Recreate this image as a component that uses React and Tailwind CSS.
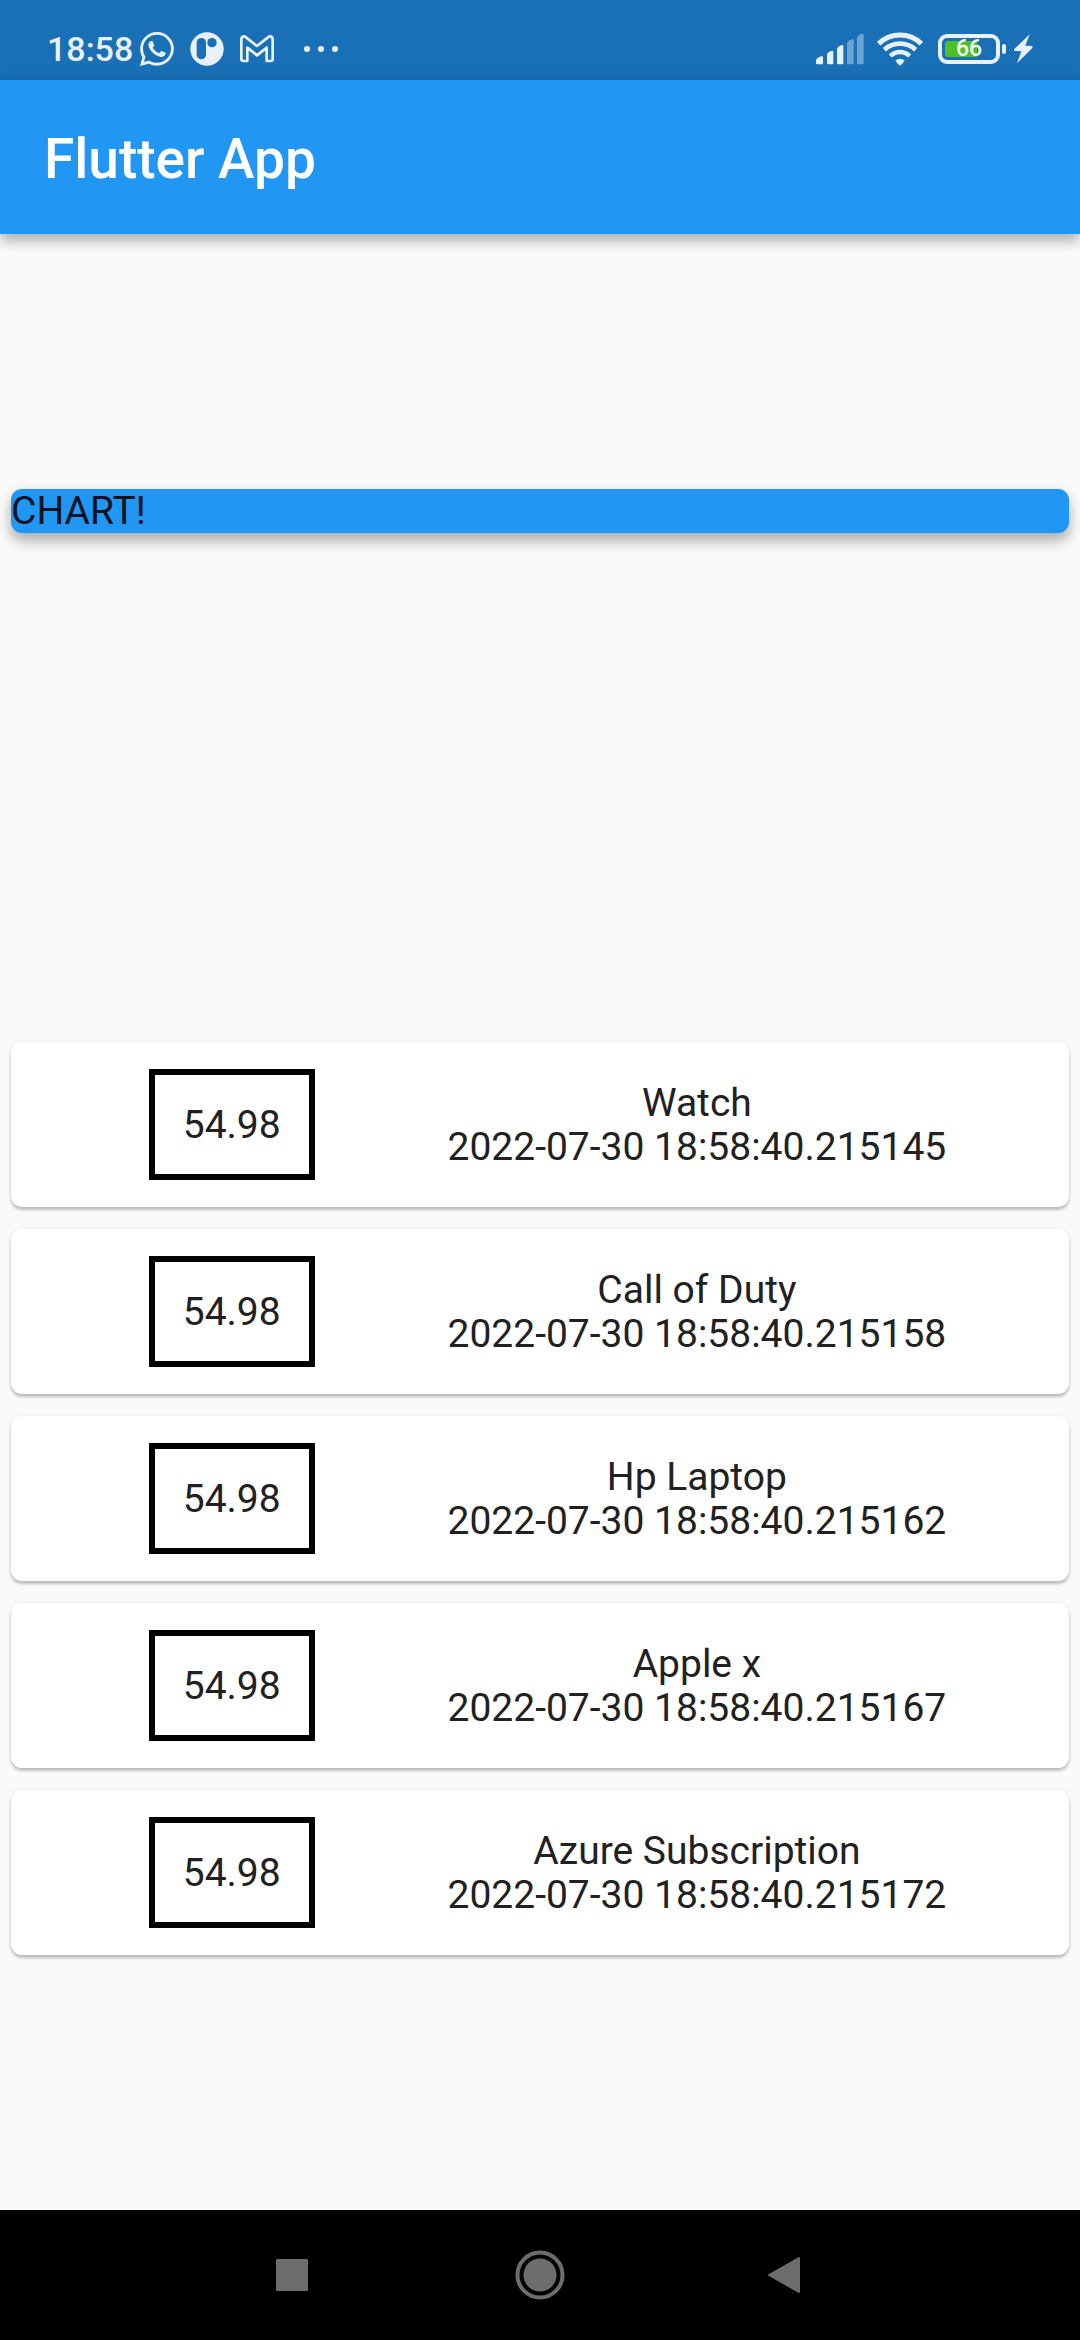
import React from "react";
import { BsWhatsapp } from "react-icons/bs";

const transactions = [
  { title: "Watch", amount: "54.98", date: "2022-07-30 18:58:40.215145" },
  { title: "Call of Duty", amount: "54.98", date: "2022-07-30 18:58:40.215158" },
  { title: "Hp Laptop", amount: "54.98", date: "2022-07-30 18:58:40.215162" },
  { title: "Apple x", amount: "54.98", date: "2022-07-30 18:58:40.215167" },
  { title: "Azure Subscription", amount: "54.98", date: "2022-07-30 18:58:40.215172" },
];

function PinIcon() {
  return (
    <svg className="h-[34px] w-[34px]" viewBox="0 0 102 102" aria-hidden="true">
      <circle cx="51" cy="51" r="50" fill="#e8f1f8" />
      <rect x="20" y="18" width="28" height="64" rx="14" fill="#1a70b7" />
      <circle cx="66" cy="32" r="14" fill="#1a70b7" />
    </svg>
  );
}

function MailIcon() {
  return (
    <svg className="h-[28px] w-[34px]" viewBox="0 0 102 84" fill="none" aria-hidden="true">
      <path
        d="M4 14Q4 4 12 4Q15 4 18 7L51 33L84 7Q87 4 90 4Q98 4 98 14V72Q98 78 92 78H80V38L51 61L22 38V78H10Q4 78 4 72Z"
        stroke="#e8f1f8"
        strokeWidth="8"
        strokeLinejoin="round"
      />
    </svg>
  );
}

function SignalIcon() {
  return (
    <svg className="h-[32px] w-[48px]" viewBox="0 0 144 96" fill="#e8f1f8" aria-hidden="true">
      <path d="M0 82Q2 74 16 70Q21 69 21 73V91Q21 94 18 94H3Q0 94 0 91Z" />
      <path d="M33 64Q37 55 49 53Q52 53 52 57V91Q52 94 49 94H36Q33 94 33 91Z" />
      <path d="M63 48Q67 38 79 36Q82 36 82 40V91Q82 94 79 94H66Q63 94 63 91Z" />
      <path opacity="0.4" d="M93 31Q97 21 110 18Q113 18 113 22V91Q113 94 110 94H96Q93 94 93 91Z" />
      <path opacity="0.4" d="M123 14Q127 4 140 2Q143 2 143 6V91Q143 94 140 94H126Q123 94 123 91Z" />
    </svg>
  );
}

function WifiIcon() {
  return (
    <svg className="h-[34px] w-[46px]" viewBox="0 0 138 102" fill="none" stroke="#e8f1f8" aria-hidden="true">
      <path d="M5 35Q32 9 69 9T133 35" strokeWidth="15" />
      <path d="M22 53Q42 35 69 35T116 53" strokeWidth="14" />
      <path d="M40 72Q53 60 69 60T98 72" strokeWidth="13" />
      <path d="M55 86Q69 74 83 86L73 98Q69 102 65 98Z" fill="#e8f1f8" stroke="none" />
    </svg>
  );
}

function Battery() {
  return (
    <div className="flex items-center gap-[2px]" role="img" aria-label="Battery 66 percent, charging">
      <div className="relative flex h-[30px] w-[62px] items-center justify-center rounded-[9px] border-4 border-[#e8f1f8]">
        <div className="absolute inset-y-[3px] left-[3px] w-[32px] rounded-l-[3px] bg-[#4fbf26]" />
        <span className="relative text-[23px] leading-[22px] font-medium text-[#f4faf4]">66</span>
      </div>
      <div className="h-[10px] w-[4px] rounded-[2px] bg-[#e8f1f8]" />
      <svg className="ml-[6px] h-[30px] w-[19px]" viewBox="0 0 57 90" fill="#e8f1f8" aria-hidden="true">
        <path d="M47 1L0 46Q-1 50 3 51L22 52L9 88L55 42Q57 37 53 36L34 35Z" />
      </svg>
    </div>
  );
}

function StatusBar() {
  return (
    <div className="flex h-[80px] items-center justify-between bg-[#1a70b7] pt-[18px] pr-[47px] pl-[47px]">
      <div className="flex items-center">
        <span className="text-[34px] leading-[40px] font-medium text-[#e8f1f8]">18:58</span>
        <BsWhatsapp className="ml-[7px] h-[34px] w-[34px] text-[#e8f1f8]" aria-hidden="true" />
        <span className="ml-[16px]"><PinIcon /></span>
        <span className="ml-[16px]"><MailIcon /></span>
        <span className="ml-[30px] flex gap-[8px]">
          <i className="size-[6px] rounded-full bg-[#e8f1f8]" />
          <i className="size-[6px] rounded-full bg-[#e8f1f8]" />
          <i className="size-[6px] rounded-full bg-[#e8f1f8]" />
        </span>
      </div>
      <div className="flex items-center">
        <SignalIcon />
        <span className="ml-[13px]"><WifiIcon /></span>
        <span className="ml-[15px]"><Battery /></span>
      </div>
    </div>
  );
}

function TransactionCard({ title, amount, date }) {
  return (
    <li className="m-[11px] flex items-center justify-evenly rounded-[11px] bg-white py-[27px] pl-[5px] shadow-[0_3px_3px_rgba(0,0,0,0.2),0_1px_5px_rgba(0,0,0,0.1)]">
      <div className="mx-[10px] flex h-[111px] w-[166px] items-center justify-center border-6 border-black">
        {amount}
      </div>
      <div className="text-center">
        <p>{title}</p>
        <p>{date}</p>
      </div>
    </li>
  );
}

function NavigationBar() {
  return (
    <nav className="flex h-[130px] justify-center bg-black">
      <button type="button" aria-label="Recent apps" className="flex w-[248px] items-center justify-center">
        <svg className="size-[50px]" viewBox="0 0 50 50" fill="#6d6d6d">
          <rect x="9" y="9" width="32" height="32" rx="1" />
        </svg>
      </button>
      <button type="button" aria-label="Home" className="flex w-[248px] items-center justify-center">
        <svg className="size-[50px]" viewBox="0 0 50 50" fill="#6d6d6d">
          <circle cx="25" cy="25" r="16.5" />
          <circle cx="25" cy="25" r="22.5" fill="none" stroke="#6d6d6d" strokeWidth="4" />
        </svg>
      </button>
      <button type="button" aria-label="Back" className="flex w-[248px] items-center justify-center">
        <svg className="size-[50px]" viewBox="0 0 50 50" fill="#6d6d6d" stroke="#6d6d6d" strokeWidth="2" strokeLinejoin="round">
          <path d="M6 25L36 8V42Z" />
        </svg>
      </button>
    </nav>
  );
}

export default function App() {
  return (
    <div className="flex min-h-screen flex-col bg-[#fafafa] font-[Roboto,sans-serif]">
      <StatusBar />
      <header className="flex h-[154px] items-center bg-[#2196f3] px-[44px] pt-[4px] shadow-[0_8px_12px_rgba(0,0,0,0.22),0_2px_14px_rgba(0,0,0,0.12)]">
        <h1 className="text-[55px] leading-[64px] font-medium text-white">Flutter App</h1>
      </header>
      <main className="flex flex-1 flex-col justify-around text-[39px] leading-[44px] text-[#212121]">
        <section className="m-[11px] rounded-[11px] bg-[#2196f3] text-[#04131f] shadow-[0_9px_14px_rgba(0,0,0,0.25),0_2px_12px_rgba(0,0,0,0.1)]">
          CHART!
        </section>
        <ul className="flex flex-col">
          {transactions.map((t) => (
            <TransactionCard key={t.date} {...t} />
          ))}
        </ul>
      </main>
      <NavigationBar />
    </div>
  );
}
